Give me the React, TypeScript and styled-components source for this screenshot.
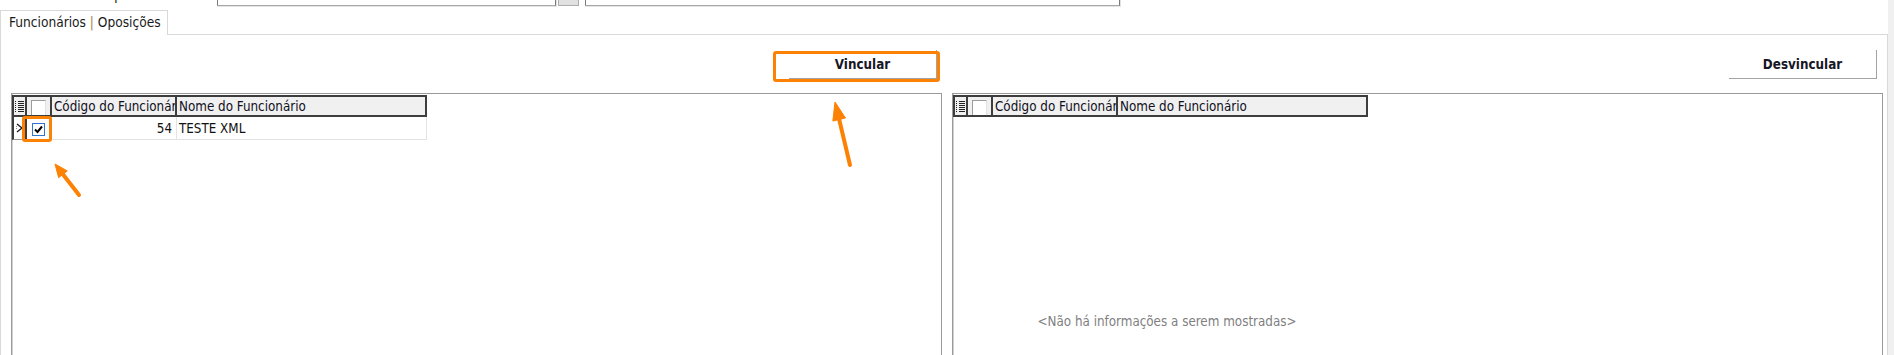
import React from "react";
import styled, { createGlobalStyle } from "styled-components";

const ORANGE = "#fd8204";
const FONT = `"DejaVu Sans Condensed", "DejaVu Sans", "Liberation Sans", sans-serif`;
const FS = "13.3px";
const DARK = "#3d3d3d";
const LIGHT = "#e3e3e3";

const GlobalStyle = createGlobalStyle`
  *, *::before, *::after { box-sizing: border-box; }
  html, body { margin: 0; padding: 0; background: #f0f0f0; overflow: hidden; }
  body { font-family: ${FONT}; font-size: ${FS}; color: #111; }
`;

const Page = styled.div`
  position: relative;
  width: 1888px;
  height: 355px;
  overflow: hidden;
  background: #fff;
`;

const TopBar = styled.div`
  display: flex;
  align-items: flex-end;
  height: 7px;
  overflow: hidden;
`;

const FieldLabel = styled.span`
  flex: none;
  width: 217px;
  padding-left: 104px;
  line-height: 16px;
  margin-bottom: 3px;
  color: #111;
`;

const TextInput = styled.div<{ $w: number }>`
  flex: none;
  width: ${(p) => p.$w}px;
  height: 22px;
  margin-bottom: 1px;
  background: #fff;
  border: 1px solid #7a7a7a;
  border-bottom-color: #a9a9a9;
  box-shadow: 1px 1px 0 #e2e2e2;
`;

const LookupButton = styled.div`
  flex: none;
  width: 21px;
  height: 22px;
  margin: 0 6px 1px 2px;
  background: #e1e1e1;
  border: 1px solid #adadad;
`;

const TabStrip = styled.div`
  position: relative;
  z-index: 1;
  display: flex;
  align-items: flex-end;
  height: 27px;
`;

const Tab = styled.div`
  width: 168px;
  height: 25px;
  margin-bottom: -1px;
  padding: 0 8px;
  background: #fff;
  border: 1px solid #d9d9d9;
  border-bottom: none;
  font-size: 13.6px;
  line-height: 22px;
  white-space: nowrap;
  color: #1a1a1a;
`;

const TabSep = styled.span`
  color: #a0824e;
`;

const Panel = styled.div`
  display: grid;
  grid-template-columns: 931px 931px;
  column-gap: 10px;
  height: 340px;
  padding: 15px 4px 0 10px;
  border: 1px solid #d9d9d9;
`;

const Column = styled.section`
  display: flex;
  flex-direction: column;
  gap: 14px;
`;

const ButtonBar = styled.div<{ $pr: number }>`
  display: flex;
  justify-content: flex-end;
  padding-right: ${(p) => p.$pr}px;
`;

const ActionButton = styled.button`
  position: relative;
  width: 148px;
  height: 29px;
  padding: 0;
  background: #fff;
  border: none;
  border-right: 1px solid #a3a3a3;
  border-bottom: 1px solid #a3a3a3;
  font-family: ${FONT};
  font-size: ${FS};
  font-weight: bold;
  color: #161624;
`;

const Highlight = styled.span<{ $t: number; $r: number; $b: number; $l: number }>`
  position: absolute;
  top: ${(p) => p.$t}px;
  right: ${(p) => p.$r}px;
  bottom: ${(p) => p.$b}px;
  left: ${(p) => p.$l}px;
  border: 3px solid ${ORANGE};
  border-radius: 3px;
  pointer-events: none;
`;

const GridBox = styled.div`
  height: 300px;
  padding-top: 1px;
  background: #fff;
  border: 1px solid #9a9a9a;
  box-shadow: inset 1px 0 0 #d0d0d0;
`;

const HeaderRow = styled.div`
  display: flex;
  width: 415px;
  height: 22px;
  background: #f0f0f0;
  border: 2px solid ${DARK};
`;

const HeaderCell = styled.div<{ $w: number; $last?: boolean; $center?: boolean }>`
  flex: none;
  display: flex;
  align-items: center;
  justify-content: ${(p) => (p.$center ? "center" : "flex-start")};
  width: ${(p) => p.$w}px;
  padding-left: ${(p) => (p.$center ? 0 : 2)}px;
  overflow: hidden;
  white-space: nowrap;
  border-right: ${(p) => (p.$last ? "none" : `2px solid ${DARK}`)};
  color: #10101e;
`;

const DataRow = styled.div`
  display: flex;
  width: 415px;
  height: 23px;
`;

const RowIndicator = styled.div`
  flex: none;
  display: flex;
  align-items: center;
  justify-content: center;
  width: 15px;
  border-left: 2px solid ${DARK};
  border-right: 2px solid ${DARK};
  border-bottom: 1px solid #9a9a9a;
`;

const DataCell = styled.div<{ $w: number; $align?: "left" | "right" | "center" }>`
  position: relative;
  flex: none;
  display: flex;
  align-items: center;
  justify-content: ${(p) =>
    p.$align === "right" ? "flex-end" : p.$align === "center" ? "center" : "flex-start"};
  width: ${(p) => p.$w}px;
  padding: 0 4px 0 2px;
  white-space: nowrap;
  border-right: 1px solid ${LIGHT};
  border-bottom: 1px solid ${LIGHT};
  color: #111;
`;

const HeaderCheck = styled.span`
  width: 15px;
  height: 16px;
  margin-top: 3px;
  background: #fff;
  border-top: 1px solid #9c9c9c;
  border-left: 1px solid #9c9c9c;
  border-right: 1px solid #e2e2e2;
`;

const CheckBox = styled.span`
  display: flex;
  width: 13px;
  height: 13px;
  margin-top: 2px;
  background: #fff;
  border: 1px solid #2f77d1;
`;

const EmptyMessage = styled.div`
  width: 428px;
  margin-top: 197px;
  text-align: center;
  line-height: 16px;
  color: #7f7f7f;
`;

const Overlay = styled.svg`
  position: absolute;
  top: 0;
  left: 0;
  pointer-events: none;
`;

const ListIcon = () => (
  <svg width="9" height="11" viewBox="0 0 9 11">
    {[0, 2, 4, 6, 8, 10].map((y) => (
      <g key={y}>
        <rect x="0" y={y} width="1" height="1" fill="#222" />
        <rect x="3" y={y} width="6" height="1" fill="#222" />
      </g>
    ))}
  </svg>
);

const RowArrow = () => (
  <svg width="8" height="10" viewBox="0 0 8 10">
    <path d="M1 1 L6 5 L1 9" fill="none" stroke="#1a1a1a" strokeWidth="1.3" />
    <path d="M0 3 L0 7" stroke="#1a1a1a" strokeWidth="1" strokeDasharray="1 1" />
  </svg>
);

const CheckMark = () => (
  <svg width="11" height="11" viewBox="0 0 11 11">
    <path d="M2 5.5 L4.5 8 L9 2.5" fill="none" stroke="#000" strokeWidth="2" />
  </svg>
);

const WIDTHS = { ind: 13, chk: 25, code: 125, name: 248 };

type Row = { code: number; name: string; checked: boolean };

const GridHeader = () => (
  <HeaderRow>
    <HeaderCell $w={WIDTHS.ind} $center>
      <ListIcon />
    </HeaderCell>
    <HeaderCell $w={WIDTHS.chk} $center>
      <HeaderCheck />
    </HeaderCell>
    <HeaderCell $w={WIDTHS.code}>Código do Funcionário</HeaderCell>
    <HeaderCell $w={WIDTHS.name} $last>
      Nome do Funcionário
    </HeaderCell>
  </HeaderRow>
);

const Arrow = ({ tail, tip, head, width }: { tail: [number, number]; tip: [number, number]; head: number; width: number }) => {
  const dx = tip[0] - tail[0];
  const dy = tip[1] - tail[1];
  const len = Math.hypot(dx, dy);
  const ux = dx / len;
  const uy = dy / len;
  const bx = tip[0] - ux * head;
  const by = tip[1] - uy * head;
  const px = -uy;
  const py = ux;
  const h = width / 2;
  const pts = `${tip[0]},${tip[1]} ${bx + px * h},${by + py * h} ${bx - px * h},${by - py * h}`;
  return (
    <g>
      <line x1={tail[0]} y1={tail[1]} x2={bx + ux * 2} y2={by + uy * 2} stroke={ORANGE} strokeWidth="4" strokeLinecap="round" />
      <polygon points={pts} fill={ORANGE} stroke={ORANGE} strokeWidth="1" strokeLinejoin="round" />
    </g>
  );
};

const rows: Row[] = [{ code: 54, name: "TESTE XML", checked: true }];

export default function App() {
  return (
    <>
      <GlobalStyle />
      <Page>
        <TopBar>
          <FieldLabel>Tipo</FieldLabel>
          <TextInput $w={339} />
          <LookupButton />
          <TextInput $w={535} />
        </TopBar>
        <TabStrip>
          <Tab>
            Funcionários <TabSep>|</TabSep> Oposições
          </Tab>
        </TabStrip>
        <Panel>
          <Column>
            <ButtonBar $pr={5}>
              <ActionButton>
                Vincular
                <Highlight $t={1} $r={-4} $b={-4} $l={-16} />
              </ActionButton>
            </ButtonBar>
            <GridBox>
              <GridHeader />
              {rows.map((r) => (
                <DataRow key={r.code}>
                  <RowIndicator>
                    <RowArrow />
                  </RowIndicator>
                  <DataCell $w={WIDTHS.chk} $align="center">
                    <CheckBox>{r.checked && <CheckMark />}</CheckBox>
                    <Highlight $t={-1} $r={-1} $b={-3} $l={-5} />
                  </DataCell>
                  <DataCell $w={WIDTHS.code} $align="right">
                    {r.code}
                  </DataCell>
                  <DataCell $w={WIDTHS.name + 2}>{r.name}</DataCell>
                </DataRow>
              ))}
            </GridBox>
          </Column>
          <Column>
            <ButtonBar $pr={6}>
              <ActionButton>Desvincular</ActionButton>
            </ButtonBar>
            <GridBox>
              <GridHeader />
              <EmptyMessage>&lt;Não há informações a serem mostradas&gt;</EmptyMessage>
            </GridBox>
          </Column>
        </Panel>
        <Overlay width="1888" height="355" viewBox="0 0 1888 355">
          <Arrow tail={[79, 195]} tip={[55, 164]} head={13} width={11} />
          <Arrow tail={[850, 165]} tip={[835, 102]} head={18} width={13} />
        </Overlay>
      </Page>
    </>
  );
}
